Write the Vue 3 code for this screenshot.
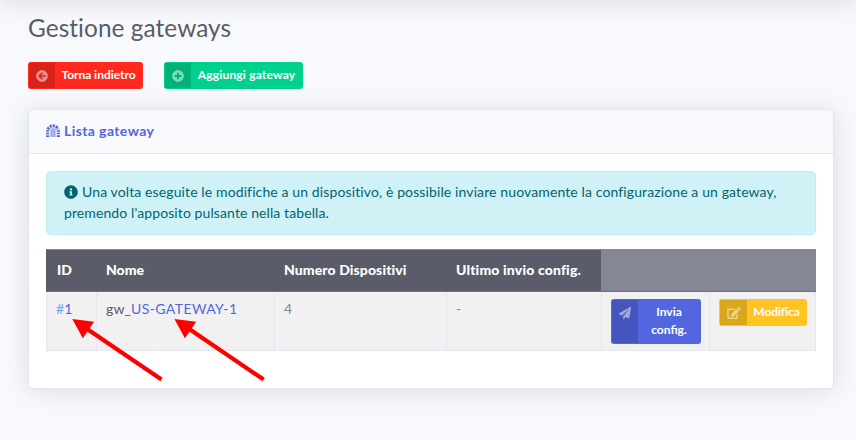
<script setup>
const arrows = [
  { tip: 72.3, id: 'id' },
  { tip: 174.4, id: 'name' },
]
</script>

<template>
  <div class="page">
    <h1><span class="title">Gestione gateways</span></h1>
    <div class="actions">
      <button class="btn red">
        <span class="icon"><svg viewBox="0 0 512 512"><path d="M256 504C119 504 8 393 8 256S119 8 256 8s248 111 248 248-111 248-248 248zm28.9-143.6L209.4 288H392c13.3 0 24-10.7 24-24v-16c0-13.3-10.7-24-24-24H209.4l75.5-72.4c9.7-9.3 9.9-24.8.4-34.3l-11-10.9c-9.4-9.4-24.6-9.4-33.9 0L107.7 239c-9.4 9.4-9.4 24.6 0 33.9l132.7 132.7c9.4 9.4 24.6 9.4 33.9 0l11-10.9c9.5-9.5 9.3-25-.4-34.3z" /></svg></span>
        <span class="label"><span class="t-back">Torna indietro</span></span>
      </button>
      <button class="btn green">
        <span class="icon"><svg viewBox="0 0 512 512"><path d="M256 8C119 8 8 119 8 256s111 248 248 248 248-111 248-248S393 8 256 8zm144 276c0 6.600-5.400 12-12 12h-92v92c0 6.600-5.400 12-12 12h-56c-6.600 0-12-5.400-12-12v-92h-92c-6.600 0-12-5.400-12-12v-56c0-6.600 5.400-12 12-12h92v-92c0-6.600 5.400-12 12-12h56c6.600 0 12 5.400 12 12v92h92c6.600 0 12 5.400 12 12v56z" /></svg></span>
        <span class="label"><span class="t-add">Aggiungi gateway</span></span>
      </button>
    </div>

    <section class="card">
      <header class="card-head">
        <svg class="dungeon" viewBox="0 0 14 14">
          <path d="M2 6.500A5.200 5.200 0 0 1 12 6.500" fill="none" stroke="currentColor" stroke-width="3" stroke-dasharray="2.250 .9" />
          <path d="M0 7.300h3.200v1.500H0zM0 9.700h3.200v1.600H0zM0 12.200h3.200v1.700H0zM10.800 7.300H14v1.500h-3.200zM10.800 9.700H14v1.600h-3.200zM10.800 12.200H14v1.700h-3.200z" />
          <path d="M4.700 5.400h.9v8.500h-.9zM6.550 4.700h.9v9.200h-.9zM8.400 5.400h.9v8.500h-.9z" />
        </svg>
        <span class="t-list">Lista gateway</span>
      </header>
      <div class="card-body">
        <div class="alert">
          <div class="line">
            <svg viewBox="0 0 512 512"><path d="M256 8C119.043 8 8 119.083 8 256c0 136.997 111.043 248 248 248s248-111.003 248-248C504 119.083 392.957 8 256 8zm0 110c23.196 0 42 18.804 42 42s-18.804 42-42 42-42-18.804-42-42 18.804-42 42-42zm56 254c0 6.627-5.373 12-12 12h-88c-6.627 0-12-5.373-12-12v-24c0-6.627 5.373-12 12-12h12v-64h-12c-6.627 0-12-5.373-12-12v-24c0-6.627 5.373-12 12-12h64c6.627 0 12 5.373 12 12v100h12c6.627 0 12 5.373 12 12v24z" /></svg>
            <span class="t-a1">Una volta eseguite le modifiche a un dispositivo, è possibile inviare nuovamente la configurazione a un gateway,</span>
          </div>
          <div class="line"><span class="t-a2">premendo l'apposito pulsante nella tabella.</span></div>
        </div>

        <div class="table">
          <div class="row head">
            <div class="cell"><span class="h-id">ID</span></div>
            <div class="cell"><span class="h-name">Nome</span></div>
            <div class="cell"><span class="h-num">Numero Dispositivi</span></div>
            <div class="cell"><span class="h-last">Ultimo invio config.</span></div>
            <div class="cell blank"></div>
          </div>
          <div class="row data">
            <div class="cell first"><span class="hash">#</span><span class="link">1</span></div>
            <div class="cell"><span class="prefix">gw_</span><span class="link t-gw">US-GATEWAY-1</span></div>
            <div class="cell">4</div>
            <div class="cell">-</div>
            <div class="cell">
              <button class="btn blue">
                <span class="icon"><svg viewBox="0 0 512 512"><path d="M476 3.200L12.500 270.600c-18.100 10.400-15.800 35.600 2.200 43.200L121 358.400l287.300-253.200c5.500-4.900 13.300 2.600 8.600 8.300L176 407v80.500c0 23.600 28.500 32.900 42.500 15.800L282 426l124.600 52.200c14.200 6 30.400-2.900 33-18.200l72-432C515 7.800 493.300-6.800 476 3.200z" /></svg></span>
                <span class="label"><span class="t-inv">Invia<br>config.</span></span>
              </button>
            </div>
            <div class="cell">
              <button class="btn yellow">
                <span class="icon"><svg class="edit" viewBox="0 0 576 512"><path d="M402.600 83.200l90.200 90.200c3.800 3.800 3.800 10 0 13.800L274.400 405.600l-92.800 10.300c-12.400 1.400-22.900-9.100-21.500-21.500l10.300-92.800L388.800 83.200c3.800-3.800 10-3.800 13.800 0zm162-22.900l-48.800-48.800c-15.200-15.200-39.900-15.200-55.200 0l-35.400 35.400c-3.800 3.800-3.800 10 0 13.800l90.200 90.200c3.800 3.800 10 3.800 13.800 0l35.400-35.400c15.200-15.300 15.200-40 0-55.200zM384 346.200V448H64V128h229.800c3.200 0 6.200-1.300 8.500-3.500l40-40c7.600-7.600 2.200-20.500-8.500-20.500H48C21.500 64 0 85.500 0 112v352c0 26.500 21.500 48 48 48h352c26.500 0 48-21.500 48-48V306.200c0-10.700-12.900-16-20.500-8.500l-40 40c-2.200 2.300-3.500 5.300-3.500 8.500z" /></svg></span>
                <span class="label"><span class="t-mod">Modifica</span></span>
              </button>
            </div>
          </div>
        </div>
      </div>
    </section>

    <svg class="arrows" viewBox="0 0 856 440" aria-hidden="true">
      <g v-for="a in arrows" :key="a.id" :transform="`translate(${a.tip} 319)`">
        <path d="M0 0L21.800 2.700L10.500 19.300Z" fill="#f00" />
        <path d="M13 8.700L89.200 60.600" stroke="#f00" stroke-width="4.200" />
      </g>
    </svg>
  </div>
</template>

<style>
body { margin: 0; background: #f8f9fc; }
</style>

<style scoped>
* { box-sizing: border-box; }
.page {
  position: relative;
  width: 856px;
  height: 440px;
  padding: 14px 22px 0 28px;
  overflow: hidden;
  background: #f8f9fc;
  color: #858796;
  font: 14px/21px Lato, "Liberation Sans", sans-serif;
}
.page::before {
  content: "";
  position: absolute;
  left: 0;
  right: 0;
  top: -61px;
  height: 61px;
  box-shadow: 0 2px 24px rgba(58, 59, 69, .15);
}
h1 { margin: 0; height: 28px; font-size: 24.400px; line-height: 28px; font-weight: 400; color: #5a5c69; white-space: nowrap; }
.title { letter-spacing: .06px; }
.actions { display: flex; gap: 21px; margin-top: 20px; }
.btn {
  display: flex;
  height: 27px;
  padding: 1px;
  border: 0;
  border-radius: 3px;
  color: #fff;
  font: 700 12px/18px Lato, "Liberation Sans", sans-serif;
  text-align: center;
  white-space: nowrap;
}
.icon { width: 26px; flex: none; display: flex; justify-content: center; padding-top: 7px; background: rgba(0, 0, 0, .15); }
.icon svg { width: 12px; height: 12px; fill: rgba(255, 255, 255, .5); }
.icon svg.edit { width: 14px; }
.label { flex: 1; padding-top: 3px; }
.t-back { letter-spacing: -.03px; }
.t-add { letter-spacing: .17px; }
.t-mod { letter-spacing: -.1px; }
.red { width: 115px; background: #ff291f; }
.green { width: 139px; background: #00d28d; }
.blue { width: 90px; height: 45px; background: #5465e0; }
.yellow { width: 88px; background: #ffc421; }
.yellow .icon { width: 27px; }
.card {
  width: 806px;
  height: 280px;
  margin-top: 20px;
  border: 1px solid #e3e6f0;
  border-radius: 5px;
  background: #fff;
  box-shadow: 0 2px 24px rgba(58, 59, 69, .15);
}
.card-head {
  display: flex;
  gap: 4px;
  height: 44px;
  padding: 10px 17px;
  border-bottom: 1px solid #e3e6f0;
  border-radius: 4px 4px 0 0;
  background: #f8f9fc;
  color: #5465e0;
  font-weight: 700;
}
.t-list { letter-spacing: .4px; }
.dungeon { width: 14px; height: 14px; margin-top: 3px; fill: currentColor; }
.card-body { padding: 17px; }
.alert { height: 64px; padding: 9px 17px; border: 1px solid #bbedf1; border-radius: 5px; background: #d0f2f7; color: #00646f; }
.line { display: flex; gap: 4px; white-space: nowrap; }
.line svg { width: 14px; height: 14px; margin-top: 4px; fill: currentColor; }
.t-a1 { letter-spacing: .115px; }
.t-a2 { letter-spacing: .1px; }
.table { margin-top: 14px; height: 102px; border: 1px solid #e3e6f0; border-top: 0; }
.row { display: grid; grid-template-columns: 49px 178px 172px 155px 108px 1fr; }
.head { height: 43px; margin: 0 -1px; padding: 0 1px; border-top: 1px solid #858796; border-bottom: 1px solid #6e707e; background: #5a5c69; color: #fff; font-weight: 900; }
.head .cell { padding: 9px 9px 0 10px; white-space: nowrap; }
.head .blank { grid-column: 5 / 7; margin-right: -1px; background: #858796; }
.h-num { letter-spacing: .1px; }
.h-last { letter-spacing: .15px; }
.data { height: 58px; background: #f1f1f1; }
.data .cell { padding: 6px 8px 0 9px; border-left: 1px solid #e3e6f0; white-space: nowrap; }
.data .btn { margin-top: 1px; }
.data .first { border-left: 0; }
.hash { color: #6fa5ff; }
.link { color: #5465e0; }
.t-gw { letter-spacing: .4px; }
.prefix { color: #5a5c69; letter-spacing: .1px; }
.arrows { position: absolute; left: 0; top: 0; width: 856px; height: 440px; pointer-events: none; }
</style>
